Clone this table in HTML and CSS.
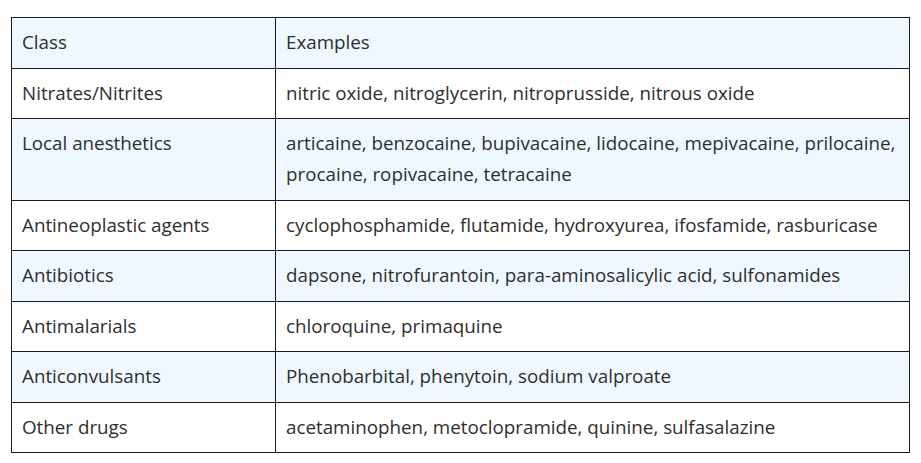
FILE: index.html
```html
<!DOCTYPE html>
<html>
<head>
<meta charset="utf-8">
<link rel="stylesheet" href="styles.css">
</head>
<body>
<table class="drug-table">
  <tr class="shade"><td class="col-class">Class</td><td>Examples</td></tr>
  <tr><td class="col-class">Nitrates/Nitrites</td><td>nitric oxide, nitroglycerin, nitroprusside, nitrous oxide</td></tr>
  <tr class="shade"><td class="col-class">Local anesthetics</td><td>articaine, benzocaine, bupivacaine, lidocaine, mepivacaine, prilocaine, procaine, ropivacaine, tetracaine</td></tr>
  <tr><td class="col-class">Antineoplastic agents</td><td>cyclophosphamide, flutamide, hydroxyurea, ifosfamide, rasburicase</td></tr>
  <tr class="shade"><td class="col-class">Antibiotics</td><td>dapsone, nitrofurantoin, para-aminosalicylic acid, sulfonamides</td></tr>
  <tr><td class="col-class">Antimalarials</td><td>chloroquine, primaquine</td></tr>
  <tr class="shade"><td class="col-class">Anticonvulsants</td><td>Phenobarbital, phenytoin, sodium valproate</td></tr>
  <tr><td class="col-class">Other drugs</td><td>acetaminophen, metoclopramide, quinine, sulfasalazine</td></tr>
</table>
</body>
</html>
```
FILE: styles.css
```css
html, body {
  margin: 0;
  background: #ffffff;
}
body {
  padding: 17px 11px;
  font-family: "Open Sans", "Noto Sans", sans-serif;
  color: #2e2e2e;
}
.drug-table {
  width: 899px;
  border-collapse: collapse;
  font-size: 18.8px;
  line-height: 31px;
}
.drug-table td {
  border: 1px solid #1a1a1a;
  padding: 9.25px 6px 9.25px 10px;
  vertical-align: top;
  text-align: left;
}
.drug-table .col-class {
  width: 247px;
}
.shade {
  background: #eef8fe;
}
```
